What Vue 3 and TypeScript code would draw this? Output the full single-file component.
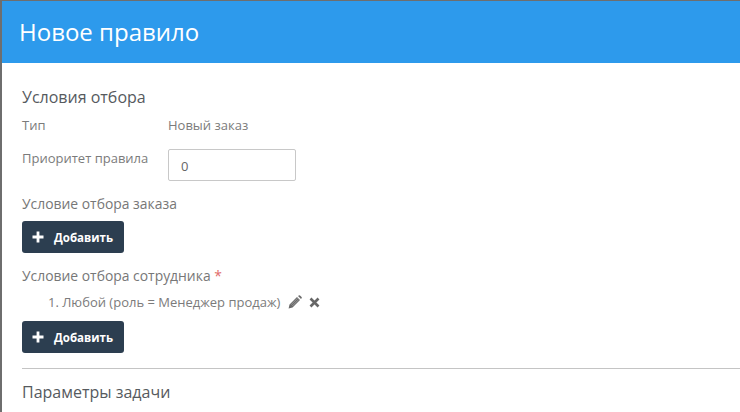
<script setup lang="ts">
const title = 'Новое правило'
</script>

<template>
  <div class="backdrop">
    <div class="modal">
      <header class="head">{{ title }}</header>
      <main class="body">
        <h3 class="section">Условия отбора</h3>
        <div class="row type-row">
          <span class="label">Тип</span>
          <span class="value">Новый заказ</span>
        </div>
        <div class="row prio-row">
          <span class="label prio-label">Приоритет правила</span>
          <input class="field" value="0" />
        </div>
        <div class="cond first">Условие отбора заказа</div>
        <button class="btn">
          <svg width="12" height="12" viewBox="0 0 12 12"><path d="M6 0.5v11M0.5 6h11" stroke="#fff" stroke-width="2.8" /></svg>
          <span>Добавить</span>
        </button>
        <div class="cond second">Условие отбора сотрудника <span class="req">*</span></div>
        <div class="item">
          <span>1. Любой (роль = Менеджер продаж)</span>
          <svg class="pencil" width="14" height="14" viewBox="0 0 14 14"><path d="M0.6 13.4l0.9-3.9L9 2l3 3-7.5 7.5zM10 1l0.8-0.6a1 1 0 0 1 1.2 0l1.6 1.6a1 1 0 0 1 0 1.2L13 4z" fill="#6a6a6a" /><path d="M3 9.8L9.6 3.2M4.3 11L10.9 4.4" stroke="#aaa" stroke-width="0.7" /></svg>
          <svg class="cross" width="11" height="11" viewBox="0 0 11 11"><path d="M1.5 1.5l8 8M9.5 1.5l-8 8" stroke="#666" stroke-width="2.6" /></svg>
        </div>
        <button class="btn second-btn">
          <svg width="12" height="12" viewBox="0 0 12 12"><path d="M6 0.5v11M0.5 6h11" stroke="#fff" stroke-width="2.8" /></svg>
          <span>Добавить</span>
        </button>
        <hr class="rule" />
        <h3 class="section params">Параметры задачи</h3>
      </main>
    </div>
  </div>
</template>

<style>
html, body { margin: 0; overflow: hidden; }
</style>

<style scoped>
.backdrop { width: 740px; height: 412px; overflow: hidden; background: #6e6e6e; padding: 1px 0 0 2px; box-sizing: border-box; font-family: "Open Sans", sans-serif; }
.modal { background: #fff; height: 411px; overflow: hidden; }
.head { height: 62px; box-sizing: border-box; background: #2d9aec; color: #fff; font-size: 24px; line-height: 62px; padding-left: 17px; }
.body { padding: 0 0 0 20px; color: #7b7b7b; font-size: 13px; }
.section { margin: 0; font-weight: 400; font-size: 16px; line-height: 20px; color: #565a5e; padding-top: 24px; }
.row { display: flex; }
.label { width: 146px; }
.type-row { margin-top: 9px; line-height: 18px; }
.prio-row { margin-top: 15px; }
.prio-label { line-height: 18px; }
.field { width: 128px; height: 32px; box-sizing: border-box; border: 1px solid #c8c8c8; border-radius: 2px; padding: 2px 12px 0; font: 13px "Open Sans", sans-serif; color: #666; outline: none; }
.cond { font-size: 13.9px; line-height: 20px; color: #777; }
.first { margin-top: 13px; }
.second { margin-top: 13px; }
.req { color: #e06a6a; }
.btn { display: flex; align-items: center; gap: 10px; width: 102px; height: 32px; margin-top: 7px; padding: 0 0 0 10px; border: 0; border-radius: 3px; background: #2c3e50; color: #fff; font: 700 11.5px "Open Sans", sans-serif; box-sizing: border-box; }
.item { display: flex; align-items: center; margin: 7px 0 0 26px; line-height: 18px; }
.second-btn { margin-top: 10px; }
.pencil { margin-left: 8px; }
.cross { margin-left: 7px; }
.rule { border: 0; border-top: 1px solid #c4c4c4; margin: 15px 0 0 0; }
.params { padding-top: 13px; }
</style>
